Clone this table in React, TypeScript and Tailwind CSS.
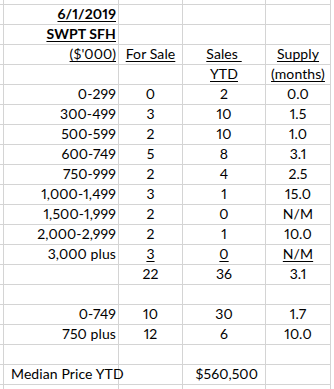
const LINE = "border-[#d4d4d4]";

type Cell = { t?: string; u?: boolean; b?: boolean; align?: "l" | "c" | "r" };
type Row = [Cell, Cell, Cell, Cell];

const c = (t: string, u = false): Cell => ({ t, u, align: "c" });
const r = (t: string, u = false, b = false): Cell => ({ t, u, b, align: "r" });
const e: Cell = {};

const ROWS: Row[] = [
  [r("6/1/2019", true, true), e, e, e],
  [r("SWPT SFH", true, true), e, e, e],
  [r("($'000)", true), c("For Sale", true), c("Sales ", true), c("Supply", true)],
  [e, e, c("YTD", true), c("(months)", true)],
  [r("0-299"), c("0"), c("2"), c("0.0")],
  [r("300-499"), c("3"), c("10"), c("1.5")],
  [r("500-599"), c("2"), c("10"), c("1.0")],
  [r("600-749"), c("5"), c("8"), c("3.1")],
  [r("750-999"), c("2"), c("4"), c("2.5")],
  [r("1,000-1,499"), c("3"), c("1"), c("15.0")],
  [r("1,500-1,999"), c("2"), c("0"), c("N/M")],
  [r("2,000-2,999"), c("2"), c("1"), c("10.0")],
  [r("3,000 plus"), c("3", true), c("0", true), c("N/M", true)],
  [e, c("22"), c("36"), c("3.1")],
  [e, e, e, e],
  [r("0-749"), c("10"), c("30"), c("1.7")],
  [r("750 plus"), c("12"), c("6"), c("10.0")],
  [e, e, e, e],
  [{ t: "Median Price YTD", align: "l" }, e, { t: "$560,500", align: "r" }, e],
];

function Text({ cell }: { cell: Cell }) {
  if (!cell.t) return null;
  return (
    <span
      className={`whitespace-pre ${cell.u ? "underline underline-offset-[2px] decoration-1" : ""} ${
        cell.b ? "font-bold" : ""
      }`}
    >
      {cell.t}
    </span>
  );
}

export default function App() {
  const cellBase = `border-r border-b ${LINE} flex items-end pb-[1px] leading-[18px]`;
  return (
    <div
      className="w-[334px] h-[389px] overflow-hidden bg-white text-[14px] text-black proportional-nums tracking-[0.1px]"
      style={{ fontFamily: "Lato, 'Open Sans', sans-serif" }}
    >
      <div className="grid grid-cols-[4px_115px_64px_83px_65px]">
        {/* top strip above first gridline */}
        <div className={`h-[5px] border-r border-b ${LINE}`} />
        <div className={`h-[5px] border-r border-b ${LINE}`} />
        <div className={`h-[5px] border-r border-b ${LINE}`} />
        <div className={`h-[5px] border-r border-b ${LINE}`} />
        <div className={`h-[5px] border-r border-b ${LINE}`} />

        {ROWS.map((row, i) => (
          <div key={i} className="contents">
            <div className={`h-[20px] border-r border-b ${LINE}`} />
            {/* col A */}
            <div
              className={`${cellBase} h-[20px] ${
                row[0].align === "l" ? "justify-start pl-[7px] z-10" : "justify-end pr-[2px]"
              }`}
            >
              <Text cell={row[0]} />
            </div>
            {/* col B */}
            <div className={`${cellBase} h-[20px] justify-center`}>
              <Text cell={row[1]} />
            </div>
            {/* col C */}
            <div
              className={`${cellBase} h-[20px] ${
                row[2].align === "r" ? "justify-end pr-[7px]" : "justify-center"
              }`}
            >
              <Text cell={row[2]} />
            </div>
            {/* col D */}
            <div className={`${cellBase} h-[20px] justify-center`}>
              <Text cell={row[3]} />
            </div>
          </div>
        ))}

        {/* partial row at the bottom */}
        <div className={`h-[6px] border-r ${LINE}`} />
        <div className={`h-[6px] border-r ${LINE}`} />
        <div className={`h-[6px] border-r ${LINE}`} />
        <div className={`h-[6px] border-r ${LINE}`} />
        <div className={`h-[6px] border-r ${LINE}`} />
      </div>
    </div>
  );
}
